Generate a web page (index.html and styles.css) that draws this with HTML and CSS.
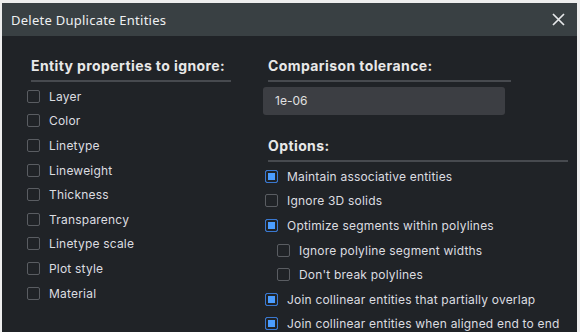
FILE: index.html
```html
<!DOCTYPE html>
<html>
<head>
    <link rel="stylesheet" href="styles.css">
</head>
<body>
    <div class="dialog">
        <div class="titlebar">
            <span class="title">Delete Duplicate Entities</span>
            <svg class="close" width="13" height="13" viewBox="0 0 13 13">
                <path d="M1 1 L12 12 M12 1 L1 12" stroke="#e6e8ea" stroke-width="1.7" fill="none"/>
            </svg>
        </div>
        <div class="content">
            <div class="col-left">
                <h3 class="heading">Entity properties to ignore:</h3>
                <ul class="checks">
                    <li><span class="box"></span>Layer</li>
                    <li><span class="box"></span>Color</li>
                    <li><span class="box"></span>Linetype</li>
                    <li><span class="box"></span>Lineweight</li>
                    <li><span class="box"></span>Thickness</li>
                    <li><span class="box"></span>Transparency</li>
                    <li><span class="box"></span>Linetype scale</li>
                    <li><span class="box"></span>Plot style</li>
                    <li><span class="box"></span>Material</li>
                </ul>
            </div>
            <div class="col-right">
                <h3 class="heading heading-short">Comparison tolerance:</h3>
                <div class="input">1e-06</div>
                <h3 class="heading heading-options">Options:</h3>
                <ul class="checks">
                    <li><span class="box checked"></span>Maintain associative entities</li>
                    <li><span class="box"></span>Ignore 3D solids</li>
                    <li><span class="box checked"></span>Optimize segments within polylines</li>
                    <li class="sub"><span class="box"></span>Ignore polyline segment widths</li>
                    <li class="sub"><span class="box"></span>Don't break polylines</li>
                    <li><span class="box checked"></span>Join collinear entities that partially overlap</li>
                    <li><span class="box checked"></span>Join collinear entities when aligned end to end</li>
                </ul>
            </div>
        </div>
    </div>
</body>
</html>
```

FILE: styles.css
```css
body {
    margin: 0;
    background: #eeeeee;
    overflow: hidden;
    font-family: Inter, Roboto, "Liberation Sans", sans-serif;
}
.dialog {
    margin: 3px 0 0 2px;
    width: 575px;
    height: 340px;
    background: #202327;
}
.titlebar {
    height: 33px;
    background: #394043;
    display: flex;
    align-items: center;
    justify-content: space-between;
    padding: 0 12px 0 9px;
}
.title {
    font-family: "Noto Sans", sans-serif;
    font-size: 13px;
    letter-spacing: 0.25px;
    color: #eef0f2;
}
.close {
    display: block;
    margin-top: -1px;
}
.content {
    display: grid;
    grid-template-columns: 204px 305px;
    column-gap: 32px;
    padding-left: 25px;
}
.heading {
    margin: 20px 0 0 4px;
    font-size: 14px;
    line-height: 20px;
    font-weight: bold;
    letter-spacing: 0.4px;
    color: #e8e8e8;
    padding-bottom: 4px;
    border-bottom: 2px solid #474a4f;
}
.col-right .heading {
    margin-left: 5px;
}
.heading-short {
    width: 243px;
}
.heading-options {
    margin-top: 21px;
}
.input {
    margin-top: 5px;
    width: 230px;
    height: 28px;
    line-height: 28px;
    padding-left: 12px;
    background: #3c3e43;
    border-radius: 3px;
    font-size: 12px;
    color: #e0e0e0;
}
.checks {
    list-style: none;
    margin: 2px 0 0 0;
    padding: 0;
}
.checks li {
    height: 24.6px;
    display: flex;
    align-items: center;
    font-size: 12px;
    letter-spacing: 0.2px;
    color: #dcdde0;
}
.col-right .checks li {
    padding-left: 2px;
}
.col-right .checks li.sub {
    padding-left: 14px;
}
.box {
    width: 11px;
    height: 11px;
    border: 1.5px solid #5a5d62;
    border-radius: 2px;
    margin-right: 9px;
    flex-shrink: 0;
}
.box.checked {
    border-color: #3a78d0;
    background: #4b9dff;
    box-shadow: inset 0 0 0 2px #202327;
}
```
